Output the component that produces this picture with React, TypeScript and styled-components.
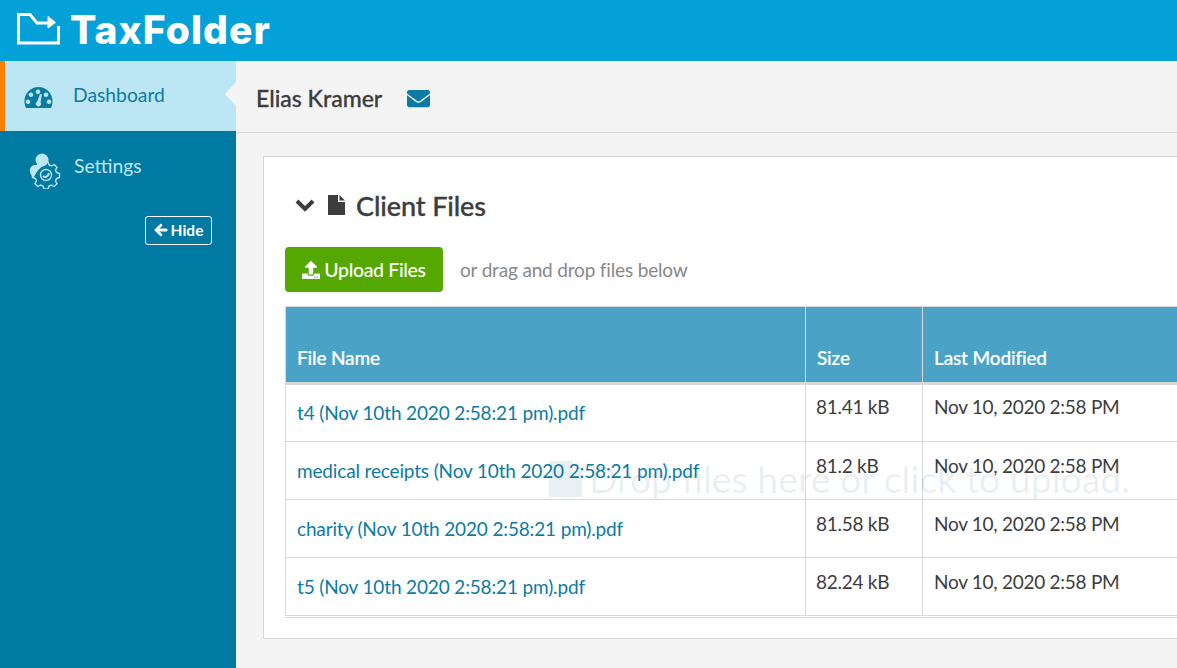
import React from "react";
import styled, { createGlobalStyle } from "styled-components";
import { FaArrowLeft, FaEnvelope, FaUpload } from "react-icons/fa";

type FileRow = { name: string; size: string; modified: string };

const files: FileRow[] = [
  { name: "t4 (Nov 10th 2020 2:58:21 pm).pdf", size: "81.41 kB", modified: "Nov 10, 2020 2:58 PM" },
  { name: "medical receipts (Nov 10th 2020 2:58:21 pm).pdf", size: "81.2 kB", modified: "Nov 10, 2020 2:58 PM" },
  { name: "charity (Nov 10th 2020 2:58:21 pm).pdf", size: "81.58 kB", modified: "Nov 10, 2020 2:58 PM" },
  { name: "t5 (Nov 10th 2020 2:58:21 pm).pdf", size: "82.24 kB", modified: "Nov 10, 2020 2:58 PM" },
];

const GlobalStyle = createGlobalStyle`
  html, body {
    margin: 0;
    padding: 0;
    height: 100%;
    overflow: hidden;
    background: #f4f4f4;
    font-family: Lato, "Open Sans", sans-serif;
  }
  * { box-sizing: border-box; }
`;

const Page = styled.div`
  width: 1177px;
  height: 668px;
  display: flex;
  flex-direction: column;
  overflow: hidden;
`;

const TopBar = styled.header`
  height: 61px;
  flex: none;
  background: #03a1d8;
  display: flex;
  align-items: flex-start;
  padding: 12px 0 0 17px;
  gap: 10px;
`;

const LogoText = styled.span`
  color: #fff;
  font-family: Inter, Lato, sans-serif;
  font-weight: 800;
  font-size: 39px;
  line-height: 36px;
  letter-spacing: 1.050px;
`;

const Body = styled.div`
  flex: 1;
  display: flex;
  min-height: 0;
`;

const Sidebar = styled.nav`
  width: 236px;
  flex: none;
  background: #0079a3;
  display: flex;
  flex-direction: column;
`;

const NavItem = styled.a<{ $active?: boolean }>`
  position: relative;
  height: 70px;
  flex: none;
  display: flex;
  align-items: flex-start;
  gap: 20px;
  padding: ${(p) => (p.$active ? "22px 0 0 19px" : "23px 0 0 24px")};
  font-size: 19.300px;
  line-height: 23px;
  color: ${(p) => (p.$active ? "#0b7ba3" : "#bde6f4")};
  background: ${(p) => (p.$active ? "#bde6f4" : "transparent")};
  border-left: ${(p) => (p.$active ? "5px solid #ff8000" : "none")};
`;

const NavNotch = styled.span`
  position: absolute;
  right: 0;
  top: 21px;
  border-style: solid;
  border-width: 12px 11px 12px 0;
  border-color: transparent #f4f4f4 transparent transparent;
`;

const NavIcon = styled.svg`
  flex: none;
  display: block;
`;

const HideRow = styled.div`
  display: flex;
  justify-content: flex-end;
  padding: 15px 24px 0 0;
`;

const HideButton = styled.button`
  width: 67px;
  height: 29px;
  display: flex;
  align-items: center;
  justify-content: center;
  gap: 3px;
  background: transparent;
  border: 1px solid #fff;
  border-radius: 3px;
  color: #fff;
  font-family: inherit;
  font-weight: 700;
  font-size: 15.500px;
  line-height: 24px;
  padding: 0 0 2px;
`;

const Main = styled.main`
  position: relative;
  flex: 1;
  min-width: 0;
  overflow: hidden;
`;

const UserBar = styled.div`
  height: 72px;
  display: flex;
  align-items: center;
  gap: 25px;
  padding: 3px 0 0 20px;
  border-bottom: 1px solid #d6d6d6;
  color: #3d3d3d;
  font-size: 23px;
  font-weight: 700;
`;

const UserName = styled.span`
  font-weight: 500;
  -webkit-text-stroke: 0.3px #3d3d3d;
`;

const Card = styled.section`
  position: relative;
  width: 980px;
  height: 483px;
  margin: 23px 0 0 27px;
  padding: 0 0 0 21px;
  background: #fff;
  border: 1px solid #d4d4d4;
`;

const CardTitle = styled.h2`
  margin: 0;
  height: 90px;
  display: flex;
  align-items: center;
  padding: 6px 0 0 10px;
  color: #3d3d3d;
  font-size: 27px;
  font-weight: 500;
`;

const TitleName = styled.span`
  margin-left: 11px;
  letter-spacing: -0.1px;
  -webkit-text-stroke: 0.35px #3d3d3d;
`;

const UploadRow = styled.div`
  display: flex;
  align-items: center;
  gap: 17px;
  color: #888;
  font-size: 19px;
  letter-spacing: -0.17px;
`;

const UploadButton = styled.button`
  width: 158px;
  height: 45px;
  display: flex;
  align-items: center;
  justify-content: center;
  gap: 4px;
  background: #55a800;
  border: none;
  border-radius: 4px;
  color: #fff;
  font-family: inherit;
  font-size: 19.500px;
  letter-spacing: -0.35px;
  font-weight: 500;
  padding: 0;
`;

const TableWrap = styled.div`
  width: 892px;
  margin-top: 14px;
  border-bottom: 1px solid #d8d8d8;
  padding-bottom: 1px;
`;

const FileTable = styled.table`
  width: 892px;
  table-layout: fixed;
  border-collapse: collapse;
`;

const HeadCell = styled.th<{ $width: number }>`
  width: ${(p) => p.$width}px;
  height: 77px;
  padding: 0 11px 12px;
  vertical-align: bottom;
  text-align: left;
  background: #4aa3c7;
  color: #fff;
  font-size: 19px;
  font-weight: 500;
  line-height: 24px;
  letter-spacing: -0.15px;
  border: 1px solid #d8d8d8;
  border-bottom: 3px solid #d8d8d8;
  -webkit-text-stroke: 0.2px #fff;
`;

const Cell = styled.td<{ $link?: boolean; $inset?: number }>`
  height: 58px;
  padding: ${(p) => (p.$link ? "17px" : "12px")} 8px 0 ${(p) => p.$inset ?? 11}px;
  vertical-align: top;
  border: 1px solid #d8d8d8;
  background: #fff;
  color: ${(p) => (p.$link ? "#0b7ba3" : "#3d3d3d")};
  font-size: 19px;
  line-height: 23px;
  letter-spacing: ${(p) => (p.$link ? "-0.15px" : "-0.27px")};
  white-space: nowrap;

  tr:first-child > & {
    padding-top: ${(p) => (p.$link ? "16px" : "10px")};
  }
`;

const DropHint = styled.div`
  position: absolute;
  left: 285px;
  top: 300px;
  display: flex;
  align-items: center;
  gap: 7px;
  color: rgba(0, 93, 130, 0.09);
  font-size: 37.400px;
  line-height: 44px;
  white-space: nowrap;
  pointer-events: none;
`;

const App = () => (
  <>
    <GlobalStyle />
    <Page>
      <TopBar>
        <svg width="43" height="34" viewBox="0 0 43 34" fill="none" stroke="#fff" strokeWidth="3">
          <path d="M31 11H20L13 2.500H1.500V31H41.500V14" />
          <path d="M31 4.500L38.500 10.500L31 16Z" fill="#fff" strokeWidth="1" />
        </svg>
        <LogoText>TaxFolder</LogoText>
      </TopBar>
      <Body>
        <Sidebar>
          <NavItem $active>
            <NavIcon width="29" height="22" viewBox="0 0 29 22" style={{ marginTop: 4 }}>
              <path
                fill="#0b7ba3"
                fillRule="evenodd"
                d="M2 21C-3 10 5 0 14.500 0S32 10 27 21ZM14 2.500a2.300 2.300 0 1 0 .01 0ZM7 5.500a2.300 2.300 0 1 0 .01 0ZM22 5.500a2.300 2.300 0 1 0 .01 0ZM4 12.500a2.300 2.300 0 1 0 .01 0ZM25 12.500a2.300 2.300 0 1 0 .01 0ZM16 7L13.300 14.500a2.600 2.600 0 1 0 3.200 .8L18 7.500Z"
              />
            </NavIcon>
            Dashboard
            <NavNotch />
          </NavItem>
          <NavItem>
            <NavIcon width="35" height="37" viewBox="0 0 35 37" style={{ marginTop: -2, marginRight: -9, marginLeft: 4 }}>
              <circle cx="14" cy="8" r="6.500" fill="#bde6f4" />
              <path d="M6 26C1 22 0 15 6 13H16C11 17 7 21 6 26Z" fill="#bde6f4" />
              <path
                fill="none"
                stroke="#bde6f4"
                strokeWidth="1.400"
                d="M16 10h4l1 3 2.500 1 2.700-1.500 2.800 2.800-1.500 2.700 1 2.500 3 1v4l-3 1-1 2.500 1.500 2.700-2.800 2.800-2.700-1.500-2.500 1-1 3h-4l-1-3-2.500-1-2.700 1.500-2.800-2.800 1.500-2.700-1-2.500-3-1v-4l3-1 1-2.500-1.500-2.700 2.800-2.800 2.700 1.500 2.500-1Z"
              />
              <circle cx="18" cy="23" r="5.500" fill="none" stroke="#bde6f4" strokeWidth="1.400" />
              <path d="M15 24c2 2 5 1 6-3" fill="none" stroke="#bde6f4" strokeWidth="2" />
            </NavIcon>
            Settings
          </NavItem>
          <HideRow>
            <HideButton>
              <FaArrowLeft size={14} stroke="#fff" strokeWidth={30} />
              Hide
            </HideButton>
          </HideRow>
        </Sidebar>
        <Main>
          <UserBar>
            <UserName>Elias Kramer</UserName>
            <FaEnvelope size={23} color="#0b7ba3" />
          </UserBar>
          <Card>
            <CardTitle>
              <svg width="20" height="14" viewBox="0 0 20 14" fill="none" stroke="#3d3d3d" strokeWidth="4">
                <path d="M2 3L10 11L18 3" />
              </svg>
              <svg width="17" height="20" viewBox="0 0 17 20" fill="#3d3d3d" style={{ marginLeft: 13 }}>
                <path d="M0 0H10V7H17V20H0ZM11.500 0L17 5.500H11.500Z" />
              </svg>
              <TitleName>Client Files</TitleName>
            </CardTitle>
            <UploadRow>
              <UploadButton>
                <FaUpload size={18} />
                Upload Files
              </UploadButton>
              or drag and drop files below
            </UploadRow>
            <TableWrap>
              <FileTable>
                <thead>
                  <tr>
                    <HeadCell $width={520}>File Name</HeadCell>
                    <HeadCell $width={117}>Size</HeadCell>
                    <HeadCell $width={255}>Last Modified</HeadCell>
                  </tr>
                </thead>
                <tbody>
                  {files.map((file) => (
                    <tr key={file.name}>
                      <Cell $link>{file.name}</Cell>
                      <Cell $inset={10}>{file.size}</Cell>
                      <Cell>{file.modified}</Cell>
                    </tr>
                  ))}
                </tbody>
              </FileTable>
            </TableWrap>
            <DropHint>
              <svg width="33" height="36" viewBox="0 0 33 36" fill="currentColor">
                <path d="M0 0H24V10H33V36H0ZM26 0L33 8H26Z" />
              </svg>
              Drop files here or click to upload.
            </DropHint>
          </Card>
        </Main>
      </Body>
    </Page>
  </>
);

export default App;
